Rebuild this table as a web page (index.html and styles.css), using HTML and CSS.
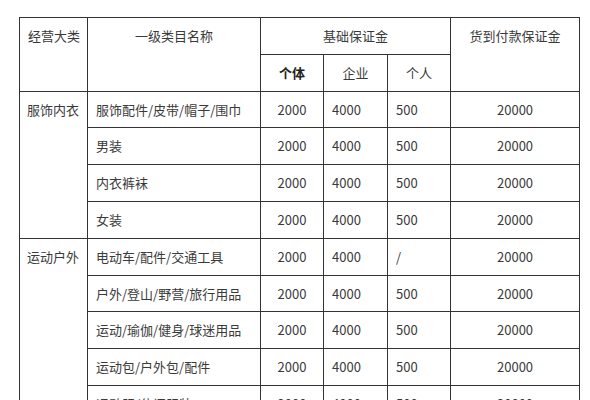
FILE: index.html
```html
<!DOCTYPE html>
<html lang="zh-CN">
<head>
<meta charset="utf-8">
<title>保证金标准</title>
<link rel="stylesheet" href="styles.css">
</head>
<body>
<table class="fee-table">
  <colgroup>
    <col class="c-cat">
    <col class="c-name">
    <col class="c-num">
    <col class="c-num2">
    <col class="c-num">
    <col class="c-cod">
  </colgroup>
  <thead>
    <tr>
      <th rowspan="2">经营大类</th>
      <th rowspan="2">一级类目名称</th>
      <th colspan="3">基础保证金</th>
      <th rowspan="2">货到付款保证金</th>
    </tr>
    <tr>
      <th class="strong">个体</th>
      <th>企业</th>
      <th>个人</th>
    </tr>
  </thead>
  <tbody>
    <tr><td rowspan="4" class="cat">服饰内衣</td><td class="name">服饰配件/皮带/帽子/围巾</td><td class="mid">2000</td><td class="left">4000</td><td class="left">500</td><td class="mid">20000</td></tr>
    <tr><td class="name">男装</td><td class="mid">2000</td><td class="left">4000</td><td class="left">500</td><td class="mid">20000</td></tr>
    <tr><td class="name">内衣裤袜</td><td class="mid">2000</td><td class="left">4000</td><td class="left">500</td><td class="mid">20000</td></tr>
    <tr><td class="name">女装</td><td class="mid">2000</td><td class="left">4000</td><td class="left">500</td><td class="mid">20000</td></tr>
    <tr><td rowspan="6" class="cat">运动户外</td><td class="name">电动车/配件/交通工具</td><td class="mid">2000</td><td class="left">4000</td><td class="left">/</td><td class="mid">20000</td></tr>
    <tr><td class="name">户外/登山/野营/旅行用品</td><td class="mid">2000</td><td class="left">4000</td><td class="left">500</td><td class="mid">20000</td></tr>
    <tr><td class="name">运动/瑜伽/健身/球迷用品</td><td class="mid">2000</td><td class="left">4000</td><td class="left">500</td><td class="mid">20000</td></tr>
    <tr><td class="name">运动包/户外包/配件</td><td class="mid">2000</td><td class="left">4000</td><td class="left">500</td><td class="mid">20000</td></tr>
    <tr><td class="name">运动服/休闲服装</td><td class="mid">2000</td><td class="left">4000</td><td class="left">500</td><td class="mid">20000</td></tr>
    <tr><td class="name">运动鞋</td><td class="mid">2000</td><td class="left">4000</td><td class="left">500</td><td class="mid">20000</td></tr>
  </tbody>
</table>
</body>
</html>
```

FILE: styles.css
```css
html, body {
  margin: 0;
  padding: 0;
  background: #ffffff;
}

body {
  padding: 17px 0 0 19px;
  font-family: "Noto Sans CJK SC", "Noto Sans", sans-serif;
  font-size: 13px;
  color: #3a3a3a;
}

.fee-table {
  border-collapse: collapse;
  table-layout: fixed;
  width: 560px;
}

.c-cat { width: 68px; }
.c-name { width: 173px; }
.c-num { width: 63px; }
.c-num2 { width: 64px; }
.c-cod { width: 129px; }

.fee-table tr {
  height: 36.8px;
}

.fee-table th,
.fee-table td {
  border: 1px solid #333333;
  padding: 0 8px;
  line-height: 35px;
  vertical-align: top;
  white-space: nowrap;
  overflow: hidden;
}

.fee-table th {
  font-weight: normal;
  text-align: center;
}

.fee-table th.strong {
  font-weight: bold;
  color: #222222;
}

.fee-table td.cat {
  padding-left: 7px;
  text-align: left;
}

.fee-table td.name,
.fee-table td.left {
  text-align: left;
}

.fee-table td.mid {
  text-align: center;
}
```
